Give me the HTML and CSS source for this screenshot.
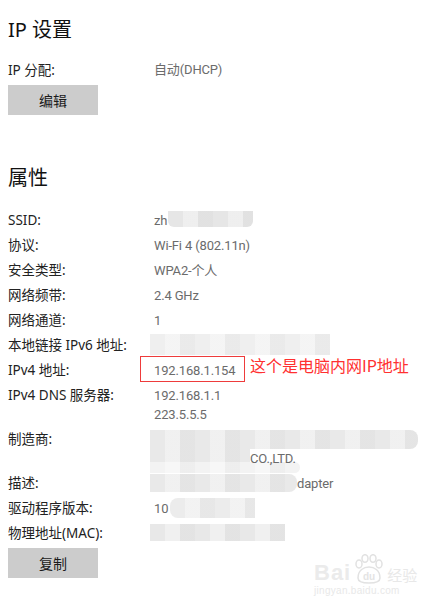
FILE: index.html
```html
<!DOCTYPE html>
<html lang="zh-CN">
<head>
<meta charset="utf-8">
<link rel="stylesheet" href="styles.css">
</head>
<body>
<div class="page">
  <h1 class="title t1">IP 设置</h1>
  <div class="row single"><div class="label">IP 分配:</div><div class="value">自动(DHCP)</div></div>
  <button class="btn b1">编辑</button>

  <h1 class="title t2">属性</h1>
  <div class="props">
    <div class="row"><div class="label">SSID:</div><div class="value">zh<span class="blur bl-ssid"></span></div></div>
    <div class="row"><div class="label">协议:</div><div class="value">Wi-Fi 4 (802.11n)</div></div>
    <div class="row"><div class="label">安全类型:</div><div class="value">WPA2-个人</div></div>
    <div class="row"><div class="label">网络频带:</div><div class="value">2.4 GHz</div></div>
    <div class="row"><div class="label">网络通道:</div><div class="value">1</div></div>
    <div class="row"><div class="label">本地链接 IPv6 地址:</div><div class="value"><span class="blur bl-v6"></span></div></div>
    <div class="row"><div class="label">IPv4 地址:</div><div class="value annot-host">192.168.1.154<span class="redbox"></span><span class="redtext">这个是电脑内网IP地址</span></div></div>
    <div class="row"><div class="label">IPv4 DNS 服务器:</div><div class="value"><div>192.168.1.1</div><div>223.5.5.5</div></div></div>
    <div class="row"><div class="label">制造商:</div><div class="value"><div class="vline"><span class="blur bl-m1"></span></div><div class="vline"><span class="blur bl-m2"></span><span class="above">CO.,LTD.</span></div></div></div>
    <div class="row"><div class="label">描述:</div><div class="value desc"><span class="blur bl-d0"></span><span class="blur bl-d1"></span>dapter</div></div>
    <div class="row"><div class="label">驱动程序版本:</div><div class="value">10<span class="blur bl-drv"></span></div></div>
    <div class="row"><div class="label">物理地址(MAC):</div><div class="value"><span class="blur bl-mac"></span></div></div>
  </div>
  <button class="btn b2">复制</button>
</div>
<div class="watermark">
  <div class="wm-top"><span class="wm-bai">Bai</span><svg class="paw" width="34" height="30" viewBox="0 0 34 30"><ellipse cx="7" cy="10" rx="3" ry="4" fill="none" stroke="#e2e2e2" stroke-width="1.5"/><ellipse cx="13" cy="4.5" rx="3" ry="3.8" fill="none" stroke="#e2e2e2" stroke-width="1.5"/><ellipse cx="21" cy="4.5" rx="3" ry="3.8" fill="none" stroke="#e2e2e2" stroke-width="1.5"/><ellipse cx="27" cy="10" rx="3" ry="4" fill="none" stroke="#e2e2e2" stroke-width="1.5"/><path d="M6 24 C6 16 12 13 17 13 C22 13 28 16 28 24 C28 28 24 29 17 29 C10 29 6 28 6 24 Z" fill="none" stroke="#e2e2e2" stroke-width="1.5"/><text x="17" y="26" text-anchor="middle" font-family="Liberation Sans, sans-serif" font-size="10" font-weight="bold" fill="#e4e4e4">du</text></svg><span class="wm-jy">经验</span></div>
  <div class="wm-url">jingyan.baidu.com</div>
</div>
</body>
</html>
```
FILE: styles.css
```css
html, body {
  margin: 0;
  padding: 0;
  background: #ffffff;
}
body {
  width: 433px;
  height: 607px;
  overflow: hidden;
  position: relative;
  font-family: "Noto Sans", "Noto Sans CJK SC", sans-serif;
  font-size: 13.5px;
  color: #1a1a1a;
}
.page {
  padding: 0 0 0 8px;
  display: flex;
  flex-direction: column;
  align-items: flex-start;
}
.title {
  margin: 0;
  font-weight: normal;
  font-size: 20px;
  line-height: 28px;
  color: #111;
  font-family: "Noto Sans", "Noto Sans CJK SC", sans-serif;
}
.t1 { margin-top: 16px; }
.t2 { margin-top: 49px; }
.row {
  display: grid;
  grid-template-columns: 146px auto;
  padding: 3px 0;
  line-height: 19px;
}
.single { margin-top: 16px; padding: 0; line-height: 20px; }
.label { color: #222222; white-space: nowrap; }
.value {
  color: #6b6b6b;
  white-space: nowrap;
  font-family: Roboto, "Noto Sans CJK SC", sans-serif;
  font-size: 13px;
  letter-spacing: -0.15px;
}
.vline { height: 19px; }
.above { position: relative; z-index: 1; }
.props { margin-top: 16px; display: flex; flex-direction: column; }
.btn {
  border: none;
  background: #cccccc;
  width: 90px;
  height: 30px;
  font-family: "Noto Sans CJK SC", sans-serif;
  font-size: 14px;
  color: #1a1a1a;
  padding: 0;
}
.b1 { margin-top: 5px; }
.b2 { margin-top: 2px; }

.blur {
  display: inline-block;
  vertical-align: top;
  background:
    repeating-linear-gradient(90deg, rgba(255,255,255,0) 0 15px, rgba(255,255,255,0.35) 15px 30px, rgba(0,0,0,0.02) 30px 45px),
    #e9e9e9;
}
.bl-ssid { width: 85px; height: 16px; margin-left: 1px; border-radius: 0 0 6px 6px; background-color: #e6e6e6; }
.bl-v6 { width: 180px; height: 21px; margin-left: -4px; margin-top: -2px; background-color: #efefef; }
.bl-m1 { width: 268px; height: 19px; margin-left: -4px; border-radius: 0 8px 8px 0; }
.bl-m2 { width: 100px; height: 17px; margin-left: -4px; }
.desc { position: relative; }
.bl-d0 { position: absolute; left: -4px; top: -12px; width: 150px; height: 11px; background-color: #f3f3f3; border-radius: 0 6px 6px 0; }
.bl-d1 { width: 147px; height: 18px; margin-left: -4px; border-radius: 0 8px 8px 0; }
.bl-drv { width: 85px; height: 20px; margin-left: 2px; margin-top: -1px; border-radius: 8px 0 0 8px; background-color: #ececec; }
.bl-mac { width: 135px; height: 17px; margin-left: -4px; background-color: #e8e8e8; }

.annot-host { position: relative; }
.redbox {
  position: absolute;
  left: -14px;
  top: -5px;
  width: 103px;
  height: 24px;
  border: 1px solid #ee3b3b;
}
.redtext {
  position: absolute;
  left: 96px;
  top: -6px;
  font-size: 16px;
  line-height: 20px;
  letter-spacing: 0;
  color: #ff3030;
  font-family: "Noto Sans CJK SC", sans-serif;
}

.watermark {
  position: absolute;
  left: 314px;
  top: 552px;
  color: #e6e6e6;
  font-family: "Liberation Sans", sans-serif;
}
.wm-top { display: flex; align-items: flex-end; height: 32px; }
.wm-bai { font-size: 22px; font-weight: bold; line-height: 22px; color: #ebebeb; letter-spacing: 1px; }
.paw { display: block; margin: 0 1px; }
.wm-jy { font-family: "Noto Sans CJK SC", sans-serif; font-size: 15px; line-height: 18px; color: #e8e8e8; }
.wm-url { font-size: 10px; line-height: 12px; color: #e8e8e8; margin-top: 1px; letter-spacing: 0.3px; }
```
